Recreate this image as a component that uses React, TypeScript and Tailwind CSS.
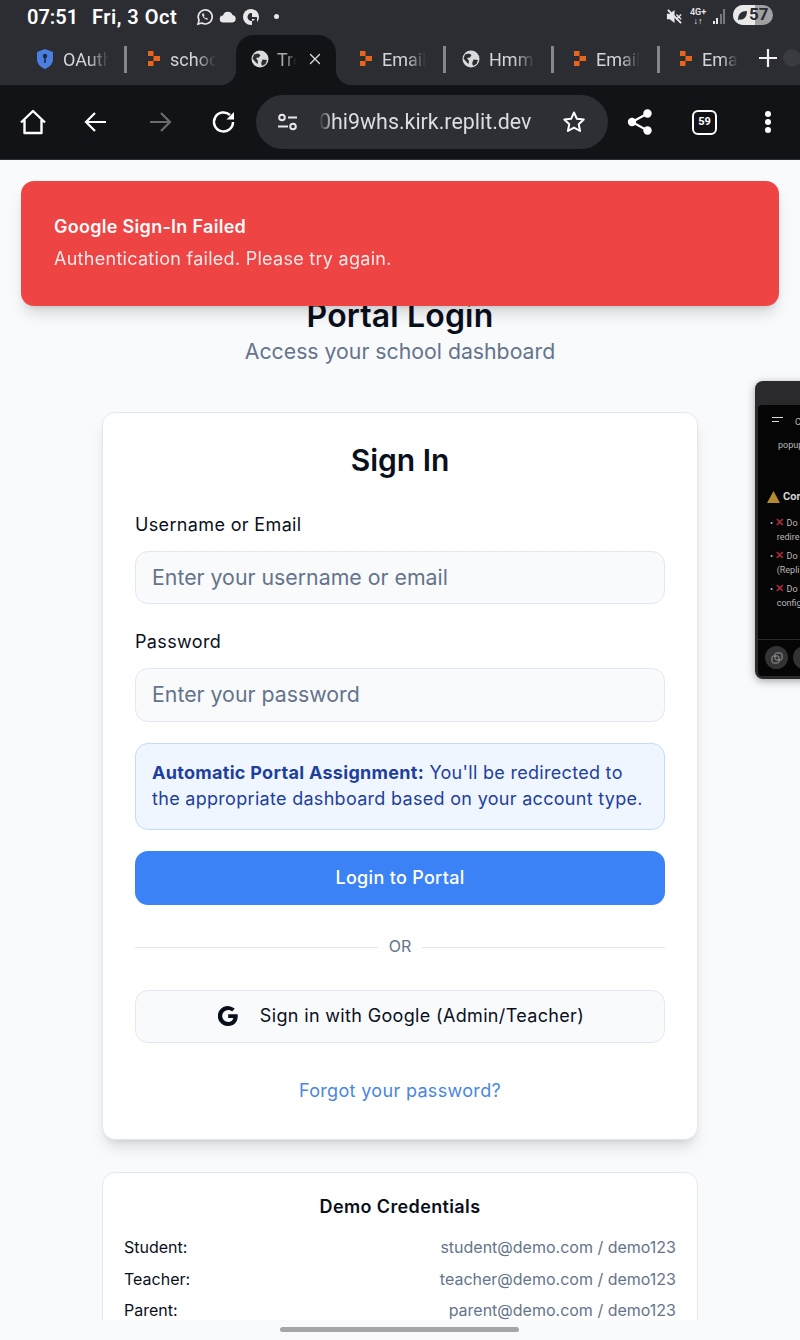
import React from "react";
import { X } from "lucide-react";

const ReplitIcon = () => (
  <svg width="14" height="18" viewBox="0 0 14 18" className="shrink-0">
    <path d="M1 1h5.500v5H1zM6.500 6H13v5H6.500zM1 11h5.500v5H1z" fill="#e8651a" />
  </svg>
);

const GlobeIcon = ({ size = 18 }: { size?: number }) => (
  <svg width={size} height={size} viewBox="0 0 18 18" className="shrink-0">
    <circle cx="9" cy="9" r="8.500" fill="#d9dadc" />
    <path d="M3 4.500 7 3.500 9.500 5 8 7.500 5 8 7 11 6.500 14 4 11.500 1.500 8.500zM11.500 9.500l4.500.5-1.500 4-3.500 2-.8-3z" fill="#2c2d32" />
  </svg>
);

const Divider = () => <div className="w-[3px] h-[27px] bg-[#85868c] shrink-0" />;

const Tab = ({ icon, label, labelWidth }: { icon: React.ReactNode; label: string; labelWidth: string }) => (
  <div className="flex items-center gap-[9px] shrink-0">
    {icon}
    <span className={`text-[18px] text-[#d4d5d8] overflow-hidden whitespace-nowrap ${labelWidth} [mask-image:linear-gradient(to_right,black_55%,transparent)]`}>
      {label}
    </span>
  </div>
);

function StatusBar() {
  return (
    <div className="h-[33px] flex items-center justify-between pl-[27px] pr-[27px] text-white">
      <div className="flex items-center">
        <span className="text-[20px] font-semibold w-[65px]">07:51</span>
        <span className="text-[20px] font-semibold tracking-[0.5px] w-[104px]">Fri, 3 Oct</span>
        <div className="flex items-center gap-[5px]">
          <svg width="18" height="18" viewBox="0 0 18 18" fill="none" stroke="#e8e8ea" strokeWidth="1.600">
            <path d="M2 16l1.100-3.700A7 7 0 1 1 5.800 15z" />
            <path d="M6.500 5.500c-1 1.500.2 3.300 1.400 4.500s3 2.200 4.300 1.200l-1.400-1.500-1 .5c-1-.5-1.500-1.100-2-2l.7-1-1-1.900z" fill="#e8e8ea" stroke="none" />
          </svg>
          <svg width="18" height="12" viewBox="0 0 18 12">
            <path d="M4.500 11.500a3.500 3.500 0 0 1-.5-7 5 5 0 0 1 9.500-.5 3.800 3.800 0 0 1 0 7.500z" fill="#e8e8ea" />
          </svg>
          <svg width="18" height="18" viewBox="0 0 18 18">
            <circle cx="9" cy="9" r="8" fill="#e8e8ea" />
            <path d="M10 5a4 4 0 1 0 3 6h-3V9h5v8h-5z" fill="#2c2d32" />
          </svg>
          <div className="w-[5px] h-[5px] rounded-full bg-[#e8e8ea] ml-[9px]" />
        </div>
      </div>
      <div className="flex items-center">
        <svg width="17" height="17" viewBox="0 0 18 18" className="mr-[8px]">
          <path d="M1 6h3l5-4v14l-5-4H1z" fill="#e8e8ea" />
          <path d="M2 2l14 14" stroke="#e8e8ea" strokeWidth="2" />
          <path d="M11 7l5 5M16 7l-5 5" stroke="#e8e8ea" strokeWidth="1.500" />
        </svg>
        <div className="flex flex-col items-center text-[9px] leading-[9px] font-semibold text-[#e8e8ea] w-[15px] mr-[7px]">
          <span>4G+</span>
          <span>↓↑</span>
        </div>
        <div className="flex items-end gap-[1.500px] h-[15px] mr-[8px]">
          <div className="w-[2px] h-[3px] bg-[#e8e8ea]" />
          <div className="w-[2px] h-[6px] bg-[#e8e8ea]" />
          <div className="w-[2px] h-[10px] bg-[#77787c]" />
          <div className="w-[2px] h-[15px] bg-[#77787c]" />
        </div>
        <div className="relative w-[40px] h-[20px] -mt-[4px] rounded-full bg-[#a0a0a2] overflow-hidden flex items-center">
          <div className="absolute left-0 top-0 h-full w-[22px] bg-[#e9e9ea]" />
          <svg width="11" height="11" viewBox="0 0 11 11" className="absolute left-[4px] top-[5px]">
            <path d="M1 10C1 4 4 1 10 1c0 6-3 9-7 8.500z" fill="#2c2d32" />
          </svg>
          <span className="relative text-[17px] font-bold text-[#2c2d32] pl-[16px] leading-none">57</span>
        </div>
      </div>
    </div>
  );
}

function TabStrip() {
  return (
    <div className="relative h-[52px] pt-[2px] pl-[37px] overflow-hidden">
      <div className="flex items-center h-[50px] pb-[2px]">
        <Tab
          labelWidth="w-[46px]"
          label="OAuth"
          icon={
            <svg width="16" height="20" viewBox="0 0 16 20" className="shrink-0 mr-[1px]">
              <path d="M8 0l8 3v7c0 5-3.500 8-8 10-4.500-2-8-5-8-10V3z" fill="#4a7fe0" />
              <circle cx="8" cy="7" r="2.200" fill="#1d2a44" />
              <path d="M7.200 8h1.600v6H7.200z" fill="#1d2a44" />
            </svg>
          }
        />
        <div className="w-[15px]" />
        <Divider />
        <div className="w-[20px]" />
        <Tab labelWidth="w-[46px]" label="school" icon={<ReplitIcon />} />
        <div className="relative flex items-center gap-[8px] w-[100px] h-[50px] -mb-[2px] pb-[2px] ml-[20px] bg-[#121317] rounded-t-[18px] pl-[15px] pr-[12px] shrink-0">
          <div className="absolute -left-[16px] bottom-0 w-[16px] h-[16px] bg-[radial-gradient(circle_at_0_0,transparent_16px,#121317_16.500px)]" />
          <div className="absolute -right-[16px] bottom-0 w-[16px] h-[16px] bg-[radial-gradient(circle_at_100%_0,transparent_16px,#121317_16.500px)]" />
          <GlobeIcon />
          <span className="text-[18px] text-[#a9aaad] overflow-hidden whitespace-nowrap w-[24px] [mask-image:linear-gradient(to_right,black_50%,transparent)]">Trello</span>
          <X size={18} strokeWidth={1.800} color="#d9dadc" className="shrink-0 ml-[2px]" />
        </div>
        <div className="w-[23px]" />
        <Tab labelWidth="w-[44px]" label="Email" icon={<ReplitIcon />} />
        <div className="w-[17px]" />
        <Divider />
        <div className="w-[16px]" />
        <Tab labelWidth="w-[46px]" label="Hmm..." icon={<GlobeIcon />} />
        <div className="w-[16px]" />
        <Divider />
        <div className="w-[19px]" />
        <Tab labelWidth="w-[44px]" label="Email" icon={<ReplitIcon />} />
        <div className="w-[17px]" />
        <Divider />
        <div className="w-[19px]" />
        <Tab labelWidth="w-[36px]" label="Email" icon={<ReplitIcon />} />
      </div>
      <svg width="22" height="22" viewBox="0 0 22 22" className="absolute left-[757px] top-[14px]">
        <path d="M11 2v18M2 11h18" stroke="#f1f1f2" strokeWidth="2.200" />
      </svg>
      <div className="absolute left-[783px] top-[16px] w-[18px] h-[18px] rounded-full bg-[#3a3b40]" />
    </div>
  );
}

function Toolbar() {
  return (
    <div className="h-[75px] bg-[#121317] flex items-center pl-[19px] border-b border-[#2d2e33]">
      <svg width="28" height="28" viewBox="0 0 28 28" fill="none" stroke="white" strokeWidth="2.400" strokeLinejoin="round">
        <path d="M2 14.500 14 3l12 11.500M5.500 12v13h17V12" />
      </svg>
      <svg width="26" height="26" viewBox="0 0 26 26" fill="none" stroke="white" strokeWidth="2.200" className="ml-[36px]">
        <path d="M23 13H3M12 4l-9 9 9 9" />
      </svg>
      <svg width="26" height="26" viewBox="0 0 26 26" fill="none" stroke="#6b6c70" strokeWidth="2.200" className="ml-[38px]">
        <path d="M3 13h20M14 4l9 9-9 9" />
      </svg>
      <svg width="26" height="26" viewBox="0 0 26 26" fill="none" stroke="white" strokeWidth="2.500" className="ml-[38px]">
        <path d="M22 13a9.500 9.500 0 1 1-3-7" />
        <path d="M23 3v7.500h-7.500z" fill="white" stroke="none" />
      </svg>
      <div className="ml-[19px] w-[352px] h-[54px] rounded-full bg-[#2e2f34] flex items-center pl-[21px] shrink-0">
        <svg width="22" height="18" viewBox="0 0 22 18" fill="none" stroke="#e8e8ea" strokeWidth="2" className="shrink-0">
          <circle cx="5" cy="4.500" r="2.800" />
          <path d="M11 4.500h9M1 13.500h10" />
          <circle cx="16" cy="13.500" r="2.800" />
        </svg>
        <span className="ml-[20px] w-[213px] shrink-0 text-[21.400px] text-[#dcdde0] whitespace-nowrap overflow-hidden [mask-image:linear-gradient(to_right,transparent,black_14px)]">
          0hi9whs.kirk.replit.dev
        </span>
        <svg width="24" height="24" viewBox="0 0 24 24" fill="none" stroke="white" strokeWidth="2" strokeLinejoin="round" className="ml-[30px] shrink-0">
          <path d="M12 2.500l2.900 6.300 6.800.8-5 4.600 1.400 6.800-6.100-3.400-6.100 3.400 1.400-6.800-5-4.600 6.800-.8z" />
        </svg>
      </div>
      <svg width="26" height="28" viewBox="0 0 26 28" className="ml-[19px]" fill="white">
        <circle cx="20.500" cy="5.500" r="4.200" />
        <circle cx="5" cy="14" r="4.200" />
        <circle cx="20.500" cy="22.500" r="4.200" />
        <path d="M20.500 5.500 5 14l15.500 8.500" stroke="white" strokeWidth="2.200" fill="none" />
      </svg>
      <div className="ml-[39px] w-[25px] h-[25px] border-[2.500px] border-white rounded-[6px] flex items-center justify-center text-white text-[11px] font-bold">
        59
      </div>
      <div className="ml-[48px] flex flex-col gap-[2px]">
        <div className="w-[6px] h-[6px] rounded-full bg-white" />
        <div className="w-[6px] h-[6px] rounded-full bg-white" />
        <div className="w-[6px] h-[6px] rounded-full bg-white" />
      </div>
    </div>
  );
}

function CredentialRow({ role, creds }: { role: string; creds: string }) {
  return (
    <div className="flex justify-between text-[16px] leading-[24px] h-[31.500px]">
      <span className="text-[#0a0f1c]">{role}</span>
      <span className="text-[#64748b]">{creds}</span>
    </div>
  );
}

function LoginCard() {
  return (
    <div className="w-[596px] h-[728px] bg-white border border-[#e2e8f0] rounded-[13px] shadow-[0_10px_15px_-3px_rgba(0,0,0,0.12),0_4px_6px_-4px_rgba(0,0,0,0.12)] px-[32px] pt-[23px]">
      <h2 className="text-[30px] leading-[48px] font-semibold text-center text-[#0a0f1c]">Sign In</h2>
      <label className="block mt-[27px] text-[18px] leading-[27px] font-[430] tracking-[0.35px] text-[#0a0f1c]">Username or Email</label>
      <div className="mt-[13px] h-[53px] rounded-[13px] border border-[#e2e8f0] bg-[#f8fafc] flex items-center pl-[16px] text-[21.300px] text-[#64748b]">
        Enter your username or email
      </div>
      <label className="block mt-[24px] text-[18px] leading-[27px] font-[430] tracking-[0.35px] text-[#0a0f1c]">Password</label>
      <div className="mt-[13px] h-[54px] rounded-[13px] border border-[#e2e8f0] bg-[#f8fafc] flex items-center pl-[16px] text-[21.300px] text-[#64748b]">
        Enter your password
      </div>
      <div className="mt-[21px] h-[87px] rounded-[13px] border border-[#bfdbfe] bg-[#eff6ff] px-[16px] pt-[16px] text-[18px] leading-[26px] tracking-[0.3px] text-[#1e3f9e]">
        <strong className="font-bold">Automatic Portal Assignment:</strong> You'll be redirected to the appropriate dashboard based on your account type.
      </div>
      <button className="mt-[21px] w-full h-[54px] pb-[2px] rounded-[13px] bg-[#3b82f6] text-white text-[18px] font-medium tracking-[0.3px]">Login to Portal</button>
      <div className="mt-[32px] flex items-center h-[20px]">
        <div className="flex-1 h-px bg-[#e2e8f0]" />
        <span className="px-[11px] text-[16px] text-[#64748b] -mt-[2px]">OR</span>
        <div className="flex-1 h-px bg-[#e2e8f0]" />
      </div>
      <button className="mt-[33px] w-full h-[53px] pb-[2px] pl-[2px] rounded-[13px] border border-[#e2e8f0] bg-[#f8fafc] flex items-center justify-center gap-[22px] text-[18px] font-[430] tracking-[0.34px] text-[#0a0f1c]">
        <svg width="20" height="20" viewBox="0 0 24 24" fill="#0a0f1c">
          <path d="M12.200 10v4.300h6.200c-.6 3-3 4.900-6.200 4.900a7.200 7.200 0 0 1 0-14.400c1.800 0 3.400.6 4.700 1.800l3.200-3.200A12 12 0 1 0 12.200 24c6.900 0 11.500-4.800 11.500-11.700 0-.8-.1-1.600-.2-2.300z" />
        </svg>
        Sign in with Google (Admin/Teacher)
      </button>
      <div className="mt-[34px] text-center text-[18px] leading-[27px] tracking-[0.33px] text-[#4a86e0]">Forgot your password?</div>
    </div>
  );
}

export default function App() {
  return (
    <div className="relative w-[800px] h-[1340px] overflow-hidden bg-[#f8fafc] font-['Inter',sans-serif]">
      <div className="bg-[#2c2d32] font-['Roboto',sans-serif]">
        <StatusBar />
        <TabStrip />
      </div>
      <div className="font-['Roboto',sans-serif]">
        <Toolbar />
      </div>

      <div className="h-[1160px] overflow-hidden flex flex-col items-center pt-[132px]">
        <h1 className="text-[32px] leading-[48px] font-semibold tracking-[0.15px] text-[#0a0f1c]">Portal Login</h1>
        <p className="text-[21.250px] leading-[32px] text-[#64748b] mt-[-5px]">Access your school dashboard</p>
        <div className="mt-[45px]">
          <LoginCard />
        </div>
        <div className="mt-[32px] w-[596px] bg-white border border-[#e2e8f0] rounded-[13px] px-[21px] pt-[20px] pb-[16px] shrink-0">
          <h3 className="text-[18px] leading-[27px] font-semibold tracking-[0.37px] text-center text-[#0a0f1c] mb-[15px]">Demo Credentials</h3>
          <CredentialRow role="Student:" creds="student@demo.com / demo123" />
          <CredentialRow role="Teacher:" creds="teacher@demo.com / demo123" />
          <CredentialRow role="Parent:" creds="parent@demo.com / demo123" />
        </div>
      </div>

      <div className="relative h-[20px] bg-[#f8fafc]">
        <div className="absolute left-[280px] top-[7px] w-[239px] h-[5px] rounded-full bg-[#a5a6a8]" />
      </div>

      {/* toast */}
      <div className="absolute left-[21px] top-[181px] w-[758px] h-[125px] rounded-[13px] bg-[#ef4444] shadow-[0_10px_15px_-3px_rgba(0,0,0,0.15),0_4px_6px_-4px_rgba(0,0,0,0.15)] pl-[33px] pt-[32px] text-[#fafafa]">
        <div className="text-[18px] leading-[27px] font-semibold tracking-[0.29px]">Google Sign-In Failed</div>
        <div className="text-[18px] leading-[27px] tracking-[0.28px] mt-[5px] opacity-90">Authentication failed. Please try again.</div>
      </div>

      {/* floating preview window */}
      <div className="absolute left-[755px] top-[381px] w-[60px] h-[298px] bg-[#2a2a2c] rounded-l-[8px] shadow-[0_2px_8px_rgba(0,0,0,0.35)] pl-[3px] pt-[24px] font-['Roboto',sans-serif]">
        <div className="h-[271px] bg-[#050505] rounded-l-[4px] relative overflow-hidden text-[9px] text-[#b8b8b8]">
          <div className="absolute left-[14px] top-[12px] w-[11px] h-px bg-[#ddd]" />
          <div className="absolute left-[14px] top-[16px] w-[7px] h-px bg-[#ddd]" />
          <div className="absolute left-[37px] top-[11px]">C</div>
          <div className="absolute left-[20px] top-[34px]">popup</div>
          <svg width="13" height="12" viewBox="0 0 13 12" className="absolute left-[9px] top-[86px]">
            <path d="M6.500 0 13 12H0z" fill="#b58a2e" />
          </svg>
          <div className="absolute left-[25px] top-[84px] text-[11px] font-bold text-[#d4d4d4]">Cor</div>
          <div className="absolute left-[12px] top-[111px] leading-[14px] whitespace-nowrap">• <span className="text-[#a8283a] font-bold text-[11px]">✕</span> Do<br />&nbsp;&nbsp;&nbsp;redire</div>
          <div className="absolute left-[12px] top-[144px] leading-[14px] whitespace-nowrap">• <span className="text-[#a8283a] font-bold text-[11px]">✕</span> Do<br />&nbsp;&nbsp;&nbsp;(Repli</div>
          <div className="absolute left-[12px] top-[177px] leading-[14px] whitespace-nowrap">• <span className="text-[#a8283a] font-bold text-[11px]">✕</span> Do<br />&nbsp;&nbsp;&nbsp;config</div>
          <div className="absolute left-0 right-0 top-[234px] h-px bg-[#2a2a2c]" />
          <div className="absolute left-[7px] top-[241px] w-[23px] h-[23px] rounded-full bg-[#333335] flex items-center justify-center">
            <svg width="12" height="12" viewBox="0 0 12 12" fill="none" stroke="#999" strokeWidth="1">
              <rect x="1" y="4" width="7" height="7" rx="1.500" />
              <rect x="4" y="1" width="7" height="7" rx="1.500" />
            </svg>
          </div>
          <div className="absolute left-[35px] top-[241px] w-[23px] h-[23px] rounded-full bg-[#333335]" />
        </div>
      </div>
    </div>
  );
}
